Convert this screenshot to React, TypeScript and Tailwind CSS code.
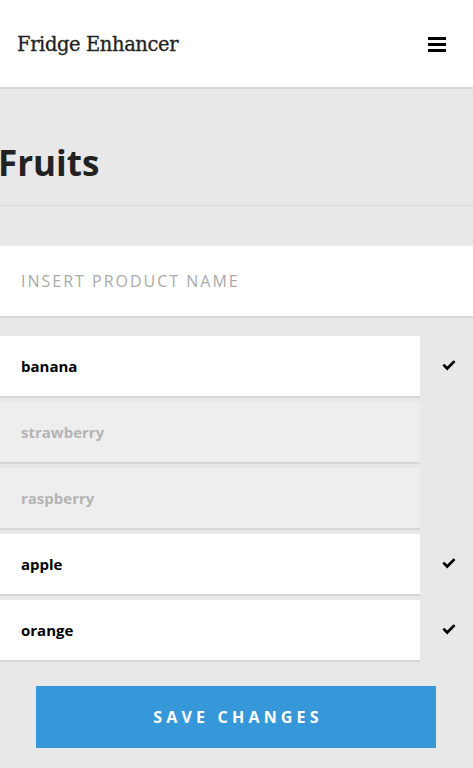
const fruits = [
  { name: "banana", active: true },
  { name: "strawberry", active: false },
  { name: "raspberry", active: false },
  { name: "apple", active: true },
  { name: "orange", active: true },
];

const Check = () => (
  <svg width="14" height="11" viewBox="0 0 14 11" fill="currentColor">
    <path d="M0.4 5.6 L2.3 3.7 L5.2 6.6 L11.6 0.2 L13.5 2.1 L5.2 10.4 Z" />
  </svg>
);

export default function App() {
  return (
    <div className="min-h-screen bg-[#e8e8e8] font-['Open_Sans',sans-serif]">
      {/* Header */}
      <header className="h-[89px] bg-white border-b-2 border-[#d6d6d6] flex items-center justify-between pl-[17px] pr-[27px]">
        <h1 className="font-['DejaVu_Serif',serif] text-[19.5px] text-[#222] tracking-[-0.4px] mt-0.5 [-webkit-text-stroke:0.3px_#222]">
          Fridge Enhancer
        </h1>
        <button className="flex flex-col gap-[3px] w-[18px] mt-0.5">
          <span className="block h-[3px] bg-black" />
          <span className="block h-[3px] bg-black" />
          <span className="block h-[3px] bg-black" />
        </button>
      </header>

      {/* Title */}
      <div className="h-[117px] border-b border-[#d9d9d9] flex items-center pt-8">
        <h2 className="text-[35px] font-bold text-[#222] -ml-[2px]">Fruits</h2>
      </div>

      {/* Input */}
      <div className="mt-10 h-[72px] bg-white border-b-2 border-[#d6d6d6] flex items-center px-[21px]">
        <input
          placeholder="INSERT PRODUCT NAME"
          className="w-full outline-none text-[16px] tracking-[2px] placeholder:text-[#aaa]"
        />
      </div>

      {/* List */}
      <ul className="mt-[18px]">
        {fruits.map((f) => (
          <li key={f.name} className="flex items-center mb-1">
            <div
              className={`w-[420px] h-[62px] border-b-2 border-[#d6d6d6] flex items-center px-[21px] text-[15px] font-bold ${
                f.active ? "bg-white text-black" : "bg-[#eeeeee] text-[#b4b4b4]"
              }`}
            >
              {f.name}
            </div>
            <div className="flex-1 flex justify-center text-black pl-[5px] -mt-1">
              {f.active && <Check />}
            </div>
          </li>
        ))}
      </ul>

      {/* Save */}
      <div className="flex justify-center pt-5 pb-5 pr-px">
        <button className="w-[400px] h-[62px] bg-[#3698d9] text-white text-[16px] font-bold tracking-[4.2px] pl-[4px]">
          SAVE CHANGES
        </button>
      </div>
    </div>
  );
}
